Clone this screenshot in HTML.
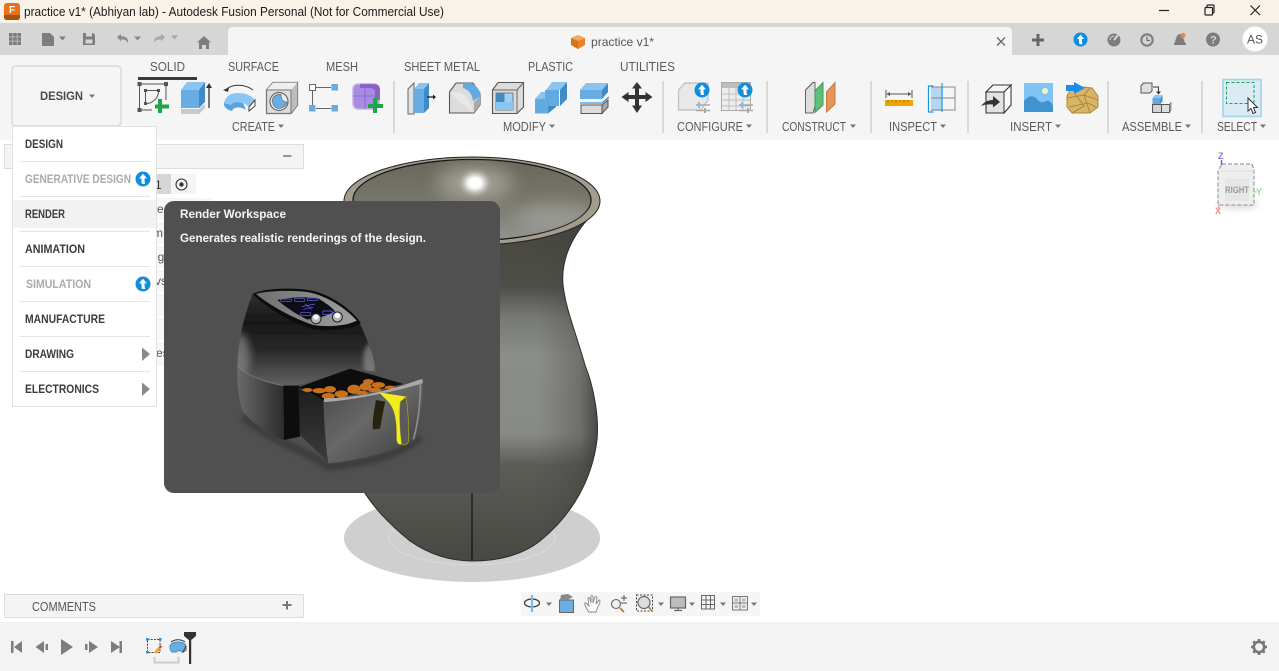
<!DOCTYPE html>
<html><head><meta charset="utf-8"><title>practice v1*</title>
<style>
html,body{margin:0;padding:0;background:#fff;width:1279px;height:671px;overflow:hidden}
svg{display:block;position:absolute;left:0;top:0}
text{font-family:"Liberation Sans",sans-serif;font-size:12px;fill:#555}
.t{font-size:12.5px;fill:#5a5a5a}
.m{font-size:11.5px;font-weight:bold;fill:#3c3c3c}
.d{font-size:11.5px;font-weight:bold;fill:#ababab}
.c{fill:#777}
</style></head><body>
<svg width="1279" height="671" viewBox="0 0 1279 671" xmlns="http://www.w3.org/2000/svg">
<defs>
<symbol id="up" viewBox="0 0 16 16"><circle cx="8" cy="8" r="7.5" fill="#0f8ee0"/><path d="M8 2.8L12 7.4H9.6C9.4 9.5 9.6 11 10.2 13H7C6.4 11 6.3 9 6.5 7.4H4Z" fill="#fff"/></symbol>
<linearGradient id="vb" x1="0" y1="0" x2="0" y2="1"><stop offset="0" stop-color="#46463f"/><stop offset=".2" stop-color="#4e4e48"/><stop offset=".29" stop-color="#777975"/><stop offset=".4" stop-color="#8b8d89"/><stop offset=".63" stop-color="#888a86"/><stop offset=".72" stop-color="#5c5c57"/><stop offset="1" stop-color="#484742"/></linearGradient>
<linearGradient id="vh" x1="0" y1="0" x2="1" y2="0"><stop offset=".76" stop-color="#444" stop-opacity="0"/><stop offset=".93" stop-color="#3c3c38" stop-opacity=".35"/><stop offset="1" stop-color="#33332f" stop-opacity=".75"/></linearGradient>
<linearGradient id="rim" x1="0" y1="0" x2="0" y2="1"><stop offset="0" stop-color="#686759"/><stop offset=".5" stop-color="#77766b"/><stop offset="1" stop-color="#93948e"/></linearGradient>
<clipPath id="rc"><ellipse cx="472" cy="200" rx="119" ry="40.5"/></clipPath>
<linearGradient id="f1" x1="0" y1="0" x2="0" y2="1"><stop offset="0" stop-color="#333"/><stop offset=".35" stop-color="#181818"/><stop offset=".62" stop-color="#282828"/><stop offset="1" stop-color="#626262"/></linearGradient>
<linearGradient id="f2" x1="0" y1="0" x2="1" y2="0"><stop offset="0" stop-color="#6a6a6a"/><stop offset=".55" stop-color="#474747"/><stop offset="1" stop-color="#2c2c2c"/></linearGradient>
<linearGradient id="f3" x1="0" y1="0" x2="1" y2="1"><stop offset="0" stop-color="#484848"/><stop offset=".45" stop-color="#686868"/><stop offset="1" stop-color="#3a3a3a"/></linearGradient>
<linearGradient id="f4" x1="0" y1="0" x2="1" y2="0"><stop offset="0" stop-color="#6f6f6f"/><stop offset="1" stop-color="#a0a0a0"/></linearGradient>
<linearGradient id="f5" x1="0" y1="0" x2="0" y2="1"><stop offset="0" stop-color="#1d1d1d"/><stop offset="1" stop-color="#3c3c3c"/></linearGradient>
<clipPath id="fc"><path d="M158 72C190 55 270 52 325 60C395 72 455 120 480 162C500 205 522 255 528 305L450 296L295 345L250 347C190 337 135 315 112 290C112 225 132 135 158 72Z"/></clipPath>
<filter id="b1"><feGaussianBlur stdDeviation="1"/></filter>
<filter id="b4" x="-100%" y="-100%" width="300%" height="300%"><feGaussianBlur stdDeviation="3.5"/></filter>
<filter id="b6" x="-100%" y="-100%" width="300%" height="300%"><feGaussianBlur stdDeviation="6"/></filter>
<filter id="b12" x="-100%" y="-100%" width="300%" height="300%"><feGaussianBlur stdDeviation="12"/></filter>
<filter id="b9" x="-100%" y="-100%" width="300%" height="300%"><feGaussianBlur stdDeviation="9"/></filter>
</defs>

<!-- backgrounds -->
<rect x="0" y="0" width="1279" height="23" fill="#f9f2e9"/>
<rect x="0" y="23" width="1279" height="32" fill="#d6d6d6"/>
<path d="M228 55V32Q228 27 233 27H1007Q1012 27 1012 32V55Z" fill="#f5f5f5"/>
<rect x="0" y="55" width="1279" height="85" fill="#f5f5f5"/>
<rect x="0" y="622" width="1279" height="49" fill="#f3f3f3"/>

<!-- title bar -->
<rect x="4" y="3" width="16" height="17" rx="3" fill="#e8711a"/><path d="M4 15H20V17Q20 20 17 20H7Q4 20 4 17Z" fill="#a8500f"/>
<text x="9" y="13" style="font-size:10px;font-weight:bold;fill:#fff">F</text>
<text x="24" y="16" textLength="420" lengthAdjust="spacingAndGlyphs" style="font-size:12.5px;fill:#1c1c1c">practice v1* (Abhiyan lab) - Autodesk Fusion Personal (Not for Commercial Use)</text>
<path d="M1159 10.5H1169" stroke="#222" stroke-width="1.2"/>
<g fill="none" stroke="#222" stroke-width="1.2"><rect x="1205" y="7.5" width="7.5" height="7.5" rx="1"/><path d="M1207 7V6Q1207 5 1208 5H1213Q1214 5 1214 6V12Q1214 13 1213 13"/><path d="M1250.5 5.5L1260 15M1260 5.5L1250.5 15"/></g>

<!-- quick access row -->
<g fill="#7d7d7d"><rect x="9" y="33" width="3.6" height="3.6"/><rect x="13.2" y="33" width="3.6" height="3.6"/><rect x="17.4" y="33" width="3.6" height="3.6"/><rect x="9" y="37.2" width="3.6" height="3.6"/><rect x="13.2" y="37.2" width="3.6" height="3.6"/><rect x="17.4" y="37.2" width="3.6" height="3.6"/><rect x="9" y="41.4" width="3.6" height="3.6"/><rect x="13.2" y="41.4" width="3.6" height="3.6"/><rect x="17.4" y="41.4" width="3.6" height="3.6"/></g>
<path d="M42 33H50L54 37V46H42Z" fill="#7d7d7d"/><path d="M59 36.5H66L62.5 40.5Z" fill="#7d7d7d"/>
<path d="M83 33H93L95 35V45H83Z" fill="#7d7d7d"/><rect x="86" y="33" width="6" height="3.5" fill="#d6d6d6"/><rect x="85.5" y="39.5" width="7" height="4" fill="#d6d6d6"/>
<path d="M117 37L121 34V36.2C126 36 128.5 38.5 128 43C126.5 40 124.5 39.2 121 39.5V41.5Z" fill="#8a8a8a"/><path d="M134 36.5H141L137.5 40.5Z" fill="#8a8a8a"/>
<path d="M165 37L161 34V36.2C156 36 153.5 38.5 154 43C155.5 40 157.5 39.2 161 39.5V41.5Z" fill="#a8a8a8"/><path d="M171 35.5H178L174.5 39.5Z" fill="#a8a8a8"/>
<path d="M197 42.5L204 36L211 42.5H209V49H206V45H202V49H199V42.5Z" fill="#7d7d7d"/>

<!-- tab -->
<path d="M578 35L585 38V45L578 49L571 45V38Z" fill="#e8842c"/><path d="M571 38L578 41L585 38L578 35Z" fill="#f3a761"/><path d="M578 41V49L571 45V38Z" fill="#d8721b"/>
<text x="591" y="46" textLength="63" lengthAdjust="spacingAndGlyphs">practice v1*</text>
<path d="M997 37.500L1005 45.500M1005 37.500L997 45.500" stroke="#666" stroke-width="1.300"/>
<path d="M1038 34V46M1032 40H1044" stroke="#666" stroke-width="3"/>
<use href="#up" x="1073" y="32" width="15" height="15"/>
<circle cx="1114" cy="40" r="6.500" fill="#7d7d7d"/><path d="M1114 40L1118 35" stroke="#d6d6d6" stroke-width="2"/><path d="M1110 40A4 4 0 0 1 1114 36" stroke="#d6d6d6" fill="none"/>
<circle cx="1147" cy="40" r="6.700" fill="#7d7d7d"/><circle cx="1147" cy="40" r="4.600" fill="#d6d6d6"/><path d="M1147 36.500V40.500H1150" stroke="#6e6e6e" fill="none" stroke-width="1.200"/>
<path d="M1174 43.500C1176.500 41 1175 35 1180 34C1184 35 1183 41 1186 43.500V45H1174Z" fill="#7d7d7d"/><circle cx="1183" cy="35.500" r="2.500" fill="#f0804a"/>
<circle cx="1213" cy="39.500" r="7" fill="#7d7d7d"/><text x="1210" y="43.500" style="font-size:11px;font-weight:bold;fill:#d6d6d6">?</text>
<circle cx="1255" cy="39" r="12.500" fill="#fff"/><text x="1247" y="43.500" textLength="16" lengthAdjust="spacingAndGlyphs">AS</text>

<!-- tabs text -->
<text class="t" x="150" y="71" textLength="35" lengthAdjust="spacingAndGlyphs">SOLID</text>
<text class="t" x="228" y="71" textLength="51" lengthAdjust="spacingAndGlyphs">SURFACE</text>
<text class="t" x="326" y="71" textLength="32" lengthAdjust="spacingAndGlyphs">MESH</text>
<text class="t" x="404" y="71" textLength="76" lengthAdjust="spacingAndGlyphs">SHEET METAL</text>
<text class="t" x="528" y="71" textLength="45" lengthAdjust="spacingAndGlyphs">PLASTIC</text>
<text class="t" x="620" y="71" textLength="55" lengthAdjust="spacingAndGlyphs">UTILITIES</text>
<rect x="138" y="77" width="59" height="3" fill="#3a3a3a"/>

<!-- design button -->
<rect x="12" y="66" width="109" height="60" rx="4" fill="#f5f5f5" stroke="#d9d9d9" stroke-width="1.500"/>
<text x="40" y="100" textLength="43" lengthAdjust="spacingAndGlyphs" style="font-weight:bold;fill:#4a4a4a">DESIGN</text>
<path d="M89 94.500H95L92 98Z" class="c"/>

<!-- separators -->
<g fill="#d9d9d9"><rect x="393" y="81" width="2" height="52"/><rect x="662" y="81" width="2" height="52"/><rect x="766" y="81" width="2" height="52"/><rect x="870" y="81" width="2" height="52"/><rect x="967" y="81" width="2" height="52"/><rect x="1107" y="81" width="2" height="52"/><rect x="1201" y="81" width="2" height="52"/></g>

<!-- group labels -->
<text class="t" x="232" y="131" textLength="43" lengthAdjust="spacingAndGlyphs">CREATE</text><path d="M278 124.500H284L281 128Z" class="c"/>
<text class="t" x="503" y="131" textLength="43" lengthAdjust="spacingAndGlyphs">MODIFY</text><path d="M549 124.500H555L552 128Z" class="c"/>
<text class="t" x="677" y="131" textLength="66" lengthAdjust="spacingAndGlyphs">CONFIGURE</text><path d="M746 124.500H752L749 128Z" class="c"/>
<text class="t" x="782" y="131" textLength="64" lengthAdjust="spacingAndGlyphs">CONSTRUCT</text><path d="M850 124.500H856L853 128Z" class="c"/>
<text class="t" x="889" y="131" textLength="48" lengthAdjust="spacingAndGlyphs">INSPECT</text><path d="M940 124.500H946L943 128Z" class="c"/>
<text class="t" x="1010" y="131" textLength="42" lengthAdjust="spacingAndGlyphs">INSERT</text><path d="M1055 124.500H1061L1058 128Z" class="c"/>
<text class="t" x="1122" y="131" textLength="60" lengthAdjust="spacingAndGlyphs">ASSEMBLE</text><path d="M1185 124.500H1191L1188 128Z" class="c"/>
<text class="t" x="1217" y="131" textLength="40" lengthAdjust="spacingAndGlyphs">SELECT</text><path d="M1260 124.500H1266L1263 128Z" class="c"/>

<!-- CREATE icons -->
<g fill="#555"><rect x="137.500" y="82" width="4" height="4"/><rect x="164" y="82" width="4" height="4"/><rect x="137.500" y="108" width="4" height="4"/><rect x="144" y="89" width="3" height="3"/><rect x="157" y="89" width="3" height="3"/><rect x="144" y="102" width="3" height="3"/></g>
<path d="M141 84H164M139.500 86V108M141 110H152M166 86V100M145.500 92V102M147 90.500H157M147 103.500C153 103 158 98 158.500 92" fill="none" stroke="#555" stroke-width="1"/>
<path d="M160 99V113M155 106.500H169" stroke="#1fa64a" stroke-width="4" fill="none"/>
<path d="M181 90L187 82H205L199 90Z" fill="#8cc4f0"/><path d="M181 90H199V108H181Z" fill="#67ace3"/><path d="M199 90L205 82V102L199 108Z" fill="#3f8bc6"/><path d="M181 109H199L205 104V108L199 114H181Z" fill="#c9c9c9"/>
<path d="M209 108V85" stroke="#333" stroke-width="1.300"/><path d="M206 88L209 83L212 88Z" fill="#333"/>
<path d="M224 103C226 95 232 93 238 93C245 93 251 95 255 100L249 107C245 103 241 102 238 102C234 102 232 103 231 105Z" fill="#8ac6f5"/>
<path d="M224 103L231 105C232 103 234 102 238 102L243 103L246 110C243 108 241 107.500 238 107.500C235 107.500 233 108.500 232 111C228 110 225 108 224 105Z" fill="#5ba1da"/>
<path d="M249 107L255 100V106L249 111Z" fill="#fff" stroke="#444"/>
<path d="M226 89.500C232 84 244 83.500 253 90" fill="none" stroke="#333" stroke-width="1"/><path d="M223 90L229 87.500L228 92Z" fill="#333"/>
<path d="M266.500 90L273 82.500H297.500V105L291 113.500H266.500Z" fill="#ddd" stroke="#555" stroke-width="1.200"/><path d="M273 82.500H297.500L291 90H266.500Z" fill="#efefef"/><path d="M291 90L297.500 82.500V105L291 113.500Z" fill="#bdbdbd"/><path d="M266.500 90H291V113.500H266.500Z" fill="none" stroke="#777"/>
<circle cx="279" cy="101.500" r="9" fill="#ededed" stroke="#666" stroke-width="1.200"/><path d="M272.500 99C274 95 279 94 281 94.500C281 99 283 102 287 102C286 106 282 108.500 279 108.500C275 108.500 272 105 272.500 99Z" fill="#66aee6" stroke="#555" stroke-width=".6"/>
<rect x="309.500" y="84.500" width="6" height="6" fill="#fff" stroke="#666"/><rect x="331.500" y="84" width="6.500" height="6.500" fill="#67ace3"/><rect x="309" y="105" width="6.500" height="6.500" fill="#67ace3"/><rect x="331.500" y="105" width="6.500" height="6.500" fill="#67ace3"/>
<path d="M316 87.500H331M312.500 91V105M316 108.500H331" stroke="#666"/>
<rect x="353" y="84" width="26" height="25" rx="5" fill="#ab8ae6" stroke="#c4b6df" stroke-width="1.500"/><path d="M353 96H379M365 88V109" stroke="#8a6ecb"/><path d="M360 84H374Q380 84 380 90V100H375V92Q375 88 369 88H360Z" fill="#7f5dc0" opacity=".85"/>
<path d="M375 98V113M368 106H383" stroke="#1fa64a" stroke-width="4"/>

<!-- MODIFY icons -->
<path d="M408 89L414 83V114H408Z" fill="#e2e2e2" stroke="#666"/><path d="M414 89H424V113H414Z" fill="#67ace3"/><path d="M414 89L419 83H429L424 89Z" fill="#8cc4f0"/><path d="M424 89L429 83V108L424 113Z" fill="#3f8bc6"/>
<path d="M427 97H434" stroke="#222" stroke-width="1.300"/><path d="M433 94.500L436 97L433 99.500Z" fill="#222"/>
<path d="M449.500 92L456 83H473L480 93V105L474 113H449.500Z" fill="#dcdcdc" stroke="#555" stroke-width="1.100"/><path d="M463 83H471C476 85 480 90 481 96L473 101C472 94 469 90 463 88Z" fill="#64aae2"/><path d="M449.500 93C460 90 470 95 473 113" fill="#e8e8e8"/><path d="M474 113L480 105V97L474 102Z" fill="#a9a9a9"/>
<path d="M492.500 90L498 82.500H523.500V107L517 113.500H492.500Z" fill="#dcdcdc" stroke="#555" stroke-width="1.100"/><rect x="496" y="93" width="17" height="17" fill="#a4d0f2" stroke="#666" stroke-width=".8"/><path d="M496 93H504.500V102H496Z" fill="#3f8bc6"/><path d="M496 102H513V110H496Z" fill="#8cc4f0"/><path d="M492.500 90H517V113.500M517 90L523.500 82.500" stroke="#666" fill="none"/>
<path d="M535 99H548V113.500H535Z" fill="#64aae2"/><path d="M535 99L541 92H554L548 99Z" fill="#8cc4f0"/><path d="M548 113.500L556 107V99L548 99Z" fill="#3f8bc6"/><path d="M545 90H559V106H545Z" fill="#64aae2"/><path d="M546 90L552 82H567L560 90Z" fill="#8cc4f0"/><path d="M560 90L567 82V99L560 106Z" fill="#3f8bc6"/>
<path d="M580 90L586 83H608L602 90Z" fill="#8cc4f0"/><path d="M580 90H602V99H580Z" fill="#67ace3"/><path d="M602 90L608 83V92L602 99Z" fill="#3f8bc6"/>
<path d="M580 103H602L609 97" stroke="#3d97e0" stroke-width="1.300" fill="none"/>
<path d="M581 105H602V113.500H581Z" fill="#dcdcdc" stroke="#555"/><path d="M602 105L608 100V107L602 113.500Z" fill="#a9a9a9" stroke="#555"/>
<path d="M637 82L642 88.500H639V95H645.500V92L652.500 97L645.500 102V99H639V105.500H642L637 113L632 105.500H635V99H628.500V102L621.500 97L628.500 92V95H635V88.500H632Z" fill="#333"/>

<!-- CONFIGURE -->
<path d="M678.500 90L685 83H708V100L701 110H678.500Z" fill="#e8e8e8" stroke="#bdbdbd" stroke-width="1.200"/>
<path d="M696 105H710M696 110.500H710" stroke="#a8a8a8" stroke-width="1.500"/><rect x="698" y="102" width="2" height="6" fill="#86bde8"/><rect x="704" y="108" width="2" height="5" fill="#a8a8a8"/>
<use href="#up" x="694" y="82" width="16" height="16"/>
<rect x="721.500" y="82.500" width="29" height="28" fill="#ededed" stroke="#aaa"/><rect x="722" y="83" width="28" height="5" fill="#bdbdbd"/><path d="M722 94H750M722 100H750M722 106H750M729 88V110M736 88V110M743 88V110" stroke="#bdbdbd"/>
<path d="M739 105H753M739 110.500H753" stroke="#a8a8a8" stroke-width="1.500"/><rect x="741" y="102" width="2" height="6" fill="#86bde8"/><rect x="747" y="108" width="2" height="5" fill="#a8a8a8"/>
<use href="#up" x="737" y="82" width="16" height="16"/>

<!-- CONSTRUCT -->
<path d="M805.500 90L813 82.500V106L805.500 112.500Z" fill="#e4e4e4" stroke="#666"/><path d="M805.500 90L813 82.500L815 82.500V106L813 113H805.500Z" fill="#ddd" stroke="#666"/>
<path d="M815 91L823 82.500V105L815 112.500Z" fill="#5dc07a" stroke="#3a9a58"/><path d="M826.500 92L835 82.500V104L826.500 112Z" fill="#e4965c" stroke="#c97a3e"/>

<!-- INSPECT -->
<rect x="885" y="100" width="28" height="6" fill="#f0a400"/><path d="M888 100V103M892 100V102M896 100V103M900 100V102M904 100V103M908 100V102" stroke="#8a6000" stroke-width=".7"/>
<path d="M886 90V98M912 90V98" stroke="#555"/><path d="M887 94H911" stroke="#555"/><path d="M890 92L886.500 94L890 96ZM908 92L911.500 94L908 96Z" fill="#555"/>
<path d="M933.500 86H928.500V112H933.500" fill="none" stroke="#2196e6" stroke-width="1.200"/><rect x="931" y="87" width="11" height="24" fill="#b3d6f2"/><path d="M931 98H955M931 87H955V110H931" fill="none" stroke="#8a8a8a"/><path d="M942 83V112" stroke="#2196e6" stroke-width="1.200"/>

<!-- INSERT -->
<path d="M986 92L993 85H1011V105L1004 113H986Z" fill="#e2e2e2" stroke="#333" stroke-width="1.100"/><path d="M1004 92V113L1011 105V85Z" fill="#fafafa" stroke="#333" stroke-width="1"/><path d="M986 92H1004L1011 85H993Z" fill="#f5f5f5" stroke="#333" stroke-width="1"/>
<path d="M981 106C984 102 988 100 993 100V96L1000 102L993 107.500V104.500C988 104 984 104.500 981 106Z" fill="#333"/>
<rect x="1024" y="83" width="29" height="29" fill="#7fc4f5"/><circle cx="1045" cy="91" r="3" fill="#f6f2c4"/><path d="M1024 112V101C1029 95 1033 95 1037 99C1040 103 1043 103 1046 101C1049 100 1052 103 1053 106V112Z" fill="#3f93cf"/>
<path d="M1070 90L1083 87L1092 88L1098 96V107L1090 113H1072L1067 107V96Z" fill="#d8b465" stroke="#a98a3e"/>
<path d="M1067 98L1084 95L1098 100M1069 107L1088 103L1096 107M1075 94L1084 106L1072 113M1084 95L1090 113M1090 88L1084 95" fill="none" stroke="#9c7f38" stroke-width=".8"/>
<path d="M1066 85H1074V82L1085 88L1074 94V91H1066Z" fill="#1b8fe8"/>

<!-- ASSEMBLE -->
<path d="M1141 86L1143.500 83H1152V91L1149.500 93H1141Z" fill="#dfdfdf" stroke="#555"/>
<path d="M1153 87H1158.500V92" stroke="#333" fill="none"/><path d="M1156 91.500H1161L1158.500 94.500Z" fill="#333"/>
<path d="M1152.500 98L1155 95H1162.500L1160 98Z" fill="#8cc4f0"/><rect x="1152.500" y="98" width="8" height="6" fill="#63a8e0"/><path d="M1160.500 98L1162.500 95V101L1160.500 104Z" fill="#3f8bc6"/>
<rect x="1152.500" y="104.500" width="9" height="8" fill="#d5d5d5" stroke="#555"/><rect x="1161.500" y="104.500" width="8" height="8" fill="#dfdfdf" stroke="#555"/><path d="M1169.500 104.500L1171 102.500V110L1169.500 112.500Z" fill="#bbb" stroke="#555" stroke-width=".6"/>

<!-- SELECT -->
<rect x="1223" y="79.500" width="38" height="37" fill="#daebf5" stroke="#a9d3ec" stroke-width="1.700"/>
<rect x="1226.500" y="82.500" width="27.500" height="21" fill="none" stroke="#16a34a" stroke-width="1" stroke-dasharray="3 2"/>
<path d="M1248 98V111L1251 108.500L1253 113.500L1255.500 112.500L1253.500 107.500L1257.500 107.500Z" fill="#fff" stroke="#333" stroke-width="1"/>

<!-- VASE -->
<ellipse cx="472" cy="538" rx="128" ry="44" fill="#cfcfcf"/>
<ellipse cx="472" cy="538" rx="83" ry="27" fill="none" stroke="#d6d6d6" stroke-width="2"/>
<path d="M355 218C366 232 376 250 381 264C384 290 375 322 365 350C352 385 346 420 347 440C350 480 372 510 410 541C430 555 450 561 472 561C498 561 522 555 540 541C572 515 592 480 597 440C599 420 595 390 585 365C575 330 566 310 563 285C561 262 570 240 587 220Z" fill="url(#vb)" stroke="#2a2a2a" stroke-width="1"/>
<path d="M355 218C366 232 376 250 381 264C384 290 375 322 365 350C352 385 346 420 347 440C350 480 372 510 410 541C430 555 450 561 472 561C498 561 522 555 540 541C572 515 592 480 597 440C599 420 595 390 585 365C575 330 566 310 563 285C561 262 570 240 587 220Z" fill="url(#vh)"/>
<path d="M472 490V560" stroke="#111" stroke-width="1.200"/>
<ellipse cx="472" cy="201" rx="128" ry="44" fill="#a19c8e" stroke="#222" stroke-width="1"/>
<ellipse cx="472" cy="200" rx="119" ry="40.500" fill="url(#rim)" stroke="#111" stroke-width="1.200"/>
<g clip-path="url(#rc)">
<ellipse cx="555" cy="218" rx="40" ry="14" fill="#a3a49f" opacity=".7" filter="url(#b9)"/>
<ellipse cx="475" cy="183" rx="38" ry="18" fill="#aeaca3" opacity=".75" filter="url(#b9)"/>
<ellipse cx="475" cy="183" rx="11" ry="9" fill="#fff" filter="url(#b4)"/>
<ellipse cx="475" cy="183" rx="7" ry="6" fill="#fff" filter="url(#b1)" opacity=".8"/>
</g>

<!-- Panel: browser behind -->
<rect x="4.500" y="144.500" width="299" height="24" fill="#f4f4f4" stroke="#dcdcdc"/>
<path d="M283 156H291.500" stroke="#777" stroke-width="1.500"/>
<rect x="157" y="174" width="14" height="20" fill="#d6d6d6"/><rect x="171" y="174" width="25" height="20" fill="#f5f5f5"/>
<text x="155" y="189" style="fill:#333">1</text>
<circle cx="181.500" cy="184.500" r="5.500" fill="none" stroke="#333" stroke-width="1.100"/><circle cx="181.500" cy="184.500" r="2.200" fill="#333"/>
<g fill="#f7f7f7"><rect x="157" y="198" width="55" height="22"/><rect x="157" y="222" width="10" height="22"/><rect x="157" y="246" width="10" height="22"/><rect x="157" y="270" width="10" height="22"/><rect x="157" y="294" width="10" height="22"/><rect x="157" y="318" width="10" height="22"/><rect x="157" y="342" width="10" height="24"/></g>
<text x="149" y="213" style="fill:#555">Se</text><text x="153" y="237" style="fill:#555">m</text><text x="155" y="261" style="fill:#555">ig</text><text x="155" y="285" style="fill:#555">vs</text><text x="156" y="357" style="fill:#555">es</text>

<!-- Tooltip -->
<rect x="164" y="201" width="336" height="292" rx="10" fill="#505050"/>
<text x="180" y="218" textLength="106" lengthAdjust="spacingAndGlyphs" style="font-weight:bold;fill:#f5f5f5">Render Workspace</text>
<text x="180" y="242" textLength="246" lengthAdjust="spacingAndGlyphs" style="font-weight:bold;fill:#f5f5f5">Generates realistic renderings of the design.</text>

<!-- Air fryer -->
<g transform="translate(200 270) scale(.33333)">
<path d="M130 440C220 520 320 540 385 590C480 580 600 560 660 500" fill="none" stroke="#2c2c2c" stroke-width="24" opacity=".5" filter="url(#b6)"/>
<g filter="url(#b1)">
<path d="M158 72C190 55 270 52 325 60C395 72 455 120 480 162C500 205 522 255 528 305L450 296L295 345L250 347C190 337 135 315 112 290C112 225 132 135 158 72Z" fill="url(#f1)"/>
<g clip-path="url(#fc)">
<ellipse cx="120" cy="260" rx="30" ry="70" fill="#8a8a8a" opacity=".7" filter="url(#b12)"/>
<ellipse cx="510" cy="270" rx="20" ry="50" fill="#9a9a9a" opacity=".6" filter="url(#b6)"/>
</g>
<path d="M112 290C150 322 200 338 250 347L252 510C200 490 145 450 126 420C116 385 110 335 112 290Z" fill="url(#f2)"/>
<path d="M112 290C150 322 200 338 250 347" fill="none" stroke="#808080" stroke-width="2"/>
<path d="M250 347L298 347L300 500L252 510Z" fill="#101010"/>
<path d="M158 72C190 55 270 52 325 60C395 72 455 120 482 158C470 175 400 185 340 178C270 155 200 115 158 72Z" fill="#101010"/>
<path d="M168 72C200 62 270 60 322 66C385 78 440 118 470 152C440 168 385 172 340 165C280 145 215 110 168 72Z" fill="url(#f4)"/>
<path d="M232 90C260 82 320 80 352 84C380 100 398 115 405 124C380 138 345 148 320 148C285 130 255 110 232 90Z" fill="#0c0c14"/>
<g fill="none" stroke="#6a66ff" stroke-width="2"><rect x="242" y="87" width="32" height="8" rx="3"/><rect x="283" y="86" width="32" height="8" rx="3"/><rect x="322" y="84" width="30" height="8" rx="3"/><path d="M305 110L345 102M310 118L340 112M315 102L335 118"/><rect x="302" y="127" width="30" height="10" rx="4"/><rect x="368" y="123" width="30" height="10" rx="4"/></g>
<circle cx="348" cy="146" r="15" fill="#b8b8b8" stroke="#222" stroke-width="3"/><circle cx="348" cy="141" r="8" fill="#fff"/>
<circle cx="412" cy="141" r="15" fill="#b8b8b8" stroke="#222" stroke-width="3"/><circle cx="412" cy="136" r="8" fill="#fff"/>
<path d="M295 352L450 296L530 318L610 342L372 392Z" fill="#0b0b0b"/>
<g fill="#c9701c"><ellipse cx="322" cy="360" rx="16" ry="6"/><ellipse cx="358" cy="362" rx="20" ry="8"/><ellipse cx="390" cy="358" rx="18" ry="10"/><ellipse cx="385" cy="378" rx="20" ry="9"/><ellipse cx="424" cy="372" rx="20" ry="11"/><ellipse cx="462" cy="358" rx="20" ry="14"/><ellipse cx="497" cy="350" rx="18" ry="12"/><ellipse cx="505" cy="335" rx="16" ry="8"/><ellipse cx="535" cy="345" rx="20" ry="9"/><ellipse cx="570" cy="352" rx="16" ry="5"/><ellipse cx="525" cy="360" rx="20" ry="7"/><ellipse cx="485" cy="368" rx="18" ry="6"/></g>
<path d="M295 355L372 392L387 578L300 495Z" fill="url(#f5)"/>
<path d="M370 392C450 388 580 362 668 332C670 400 660 480 645 512C560 552 450 575 385 580C376 520 372 450 370 392Z" fill="url(#f3)"/>
<path d="M372 385L372 396C450 392 580 366 668 340L668 328C660 326 620 345 560 360C500 375 430 385 372 385Z" fill="#a8a8a8"/>
<path d="M661 340C662 400 652 470 640 508" fill="none" stroke="#8c8c8c" stroke-width="5"/>
<path d="M528 390C522 420 516 460 519 478L540 476C546 445 550 420 556 395Z" fill="#25240e"/>
<path d="M618 380C624 420 627 470 626 512C622 526 612 526 604 522C598 480 598 430 600 395Z" fill="#5a5a5a" stroke="#b0ab20" stroke-width="2"/>
<path d="M537 367L618 380L600 395C596 420 598 470 604 522C598 526 592 520 590 512C590 470 590 425 566 396Z" fill="#f3ec1c"/>
</g></g>

<!-- Menu -->
<rect x="12.500" y="126.500" width="144" height="280" fill="#fff" stroke="#e2e2e2"/>
<rect x="13" y="200" width="143" height="28" fill="#f2f2f2"/>
<g stroke="#e6e6e6"><path d="M19 161.500H150M19 196.500H150M19 231.500H150M19 266.500H150M19 301.500H150M19 336.500H150M19 371.500H150"/></g>
<text class="m" x="25" y="148" textLength="38" lengthAdjust="spacingAndGlyphs">DESIGN</text>
<text class="d" x="25" y="183" textLength="106" lengthAdjust="spacingAndGlyphs">GENERATIVE DESIGN</text>
<text class="m" x="25" y="218" textLength="40" lengthAdjust="spacingAndGlyphs">RENDER</text>
<text class="m" x="25" y="253" textLength="60" lengthAdjust="spacingAndGlyphs">ANIMATION</text>
<text class="d" x="26" y="288" textLength="65" lengthAdjust="spacingAndGlyphs">SIMULATION</text>
<text class="m" x="25" y="323" textLength="80" lengthAdjust="spacingAndGlyphs">MANUFACTURE</text>
<text class="m" x="25" y="358" textLength="49" lengthAdjust="spacingAndGlyphs">DRAWING</text>
<text class="m" x="25" y="393" textLength="74" lengthAdjust="spacingAndGlyphs">ELECTRONICS</text>
<use href="#up" x="135" y="171" width="16" height="16"/><use href="#up" x="135" y="276" width="16" height="16"/>
<path d="M142 347.500L150 354L142 361ZM142 382.500L150 389L142 396Z" fill="#8a8a8a"/>

<!-- ViewCube -->
<ellipse cx="1238" cy="204" rx="20" ry="5" fill="#ddd" filter="url(#b4)"/>
<path d="M1222 164H1252L1254 170V205H1218V171Z" fill="#eee" stroke="#8a8a8a" stroke-dasharray="4 2" stroke-width="1"/>
<path d="M1218 171H1254" stroke="#ddd"/><rect x="1225" y="179" width="24" height="22" fill="#e6e6e6"/>
<text x="1225" y="193" textLength="24" lengthAdjust="spacingAndGlyphs" style="font-size:9px;font-weight:bold;fill:#999">RIGHT</text>
<text x="1218" y="159" style="font-size:9px;font-weight:bold;fill:#7b7be8">Z</text><text x="1215" y="214" style="font-size:9px;font-weight:bold;fill:#ef8c8c">X</text><text x="1256" y="195" style="font-size:9px;font-weight:bold;fill:#8fdc8f">Y</text>
<path d="M1221.500 160V165" stroke="#6a6ae0" stroke-width="1.500"/><path d="M1218 205L1219 209" stroke="#ef8c8c"/><path d="M1254 192H1257" stroke="#8fdc8f"/>

<!-- comments -->
<rect x="4.500" y="594.500" width="299" height="23" fill="#f4f4f4" stroke="#dcdcdc"/>
<text x="32" y="611" textLength="64" lengthAdjust="spacingAndGlyphs" style="font-size:12.5px;fill:#555">COMMENTS</text>
<path d="M287 601V609.500M282.500 605H291.500" stroke="#777" stroke-width="2"/>

<!-- nav bar -->
<rect x="521" y="592" width="239" height="24" fill="#f5f5f5"/>
<ellipse cx="532" cy="603" rx="7.500" ry="4" fill="none" stroke="#333" stroke-width="1.200"/><path d="M532 595V612" stroke="#78bcf0" stroke-width="2.200"/>
<path d="M546 602.500H552L549 606Z" class="c"/>
<rect x="559.500" y="600" width="14" height="12.500" fill="#6aaee4" stroke="#666"/><path d="M560 600L561 595L568 594L573 597L567 600Z" fill="#888"/>
<path d="M588 611C586 607 584 604 585 603C587 603 588 605 589 606L588 598C589 597 590 598 590 599L591 603L591 596C592 595 593 596 593 597V603L595 597C596 596 597 597 597 598L596 604L599 600C600 600 600 601 600 602L597 609L596 612H589Z" fill="#fafafa" stroke="#888" stroke-width=".9"/>
<circle cx="616" cy="604" r="4.500" fill="#eee" stroke="#666" stroke-width="1.100"/><path d="M620 608L624 612" stroke="#a97a3a" stroke-width="1.600"/><path d="M621 598H627M624 595V601M621 603H627" stroke="#555"/>
<rect x="636.500" y="595" width="16" height="16" fill="none" stroke="#444" stroke-dasharray="2 1.500"/><circle cx="644" cy="602.500" r="6" fill="#ddd" stroke="#666" stroke-width="1.200"/><path d="M648.500 607L652 611" stroke="#a97a3a" stroke-width="1.600"/>
<path d="M658 602.500H664L661 606Z" class="c"/>
<rect x="670.500" y="597" width="15" height="11" fill="#bcbcbc" stroke="#666" stroke-width="1.200"/><path d="M678 608V610M674 610.500H682" stroke="#666" stroke-width="1.200"/>
<path d="M689 602.500H695L692 606Z" class="c"/>
<path d="M701.500 595.500H714.500V609H701.500ZM701.500 600H714.500M701.500 604.500H714.500M706 595.500V609M710.500 595.500V609" fill="none" stroke="#666" stroke-width="1"/>
<path d="M720 602.500H726L723 606Z" class="c"/>
<rect x="732.500" y="596.500" width="15" height="13.500" fill="#f0f0f0" stroke="#777"/><path d="M732.500 603H747.500M740 596.500V610" stroke="#777"/><g fill="#bbb"><rect x="734.500" y="598.500" width="3.500" height="3"/><rect x="742" y="598.500" width="3.500" height="3"/><rect x="734.500" y="605" width="3.500" height="3"/><rect x="742" y="605" width="3.500" height="3"/></g>
<path d="M751 602.500H757L754 606Z" class="c"/>

<!-- timeline -->
<g fill="#7d7d7d"><rect x="11" y="641" width="2.500" height="12"/><path d="M22 641V653L14 647Z"/><path d="M35.500 647L44 641V653Z"/><rect x="45.500" y="644" width="2.500" height="6"/><path d="M61 639L73 647L61 655Z"/><rect x="85" y="644" width="2.500" height="6"/><path d="M89 641L98 647L89 653Z"/><path d="M111 641L120 647L111 653Z"/><rect x="119.500" y="641" width="2.500" height="12"/></g>
<rect x="147.500" y="639.500" width="12.500" height="13" fill="none" stroke="#444" stroke-dasharray="2 1.200"/>
<rect x="146" y="638" width="2.500" height="2.500" fill="#2196e6"/><rect x="159" y="638" width="2.500" height="2.500" fill="#2196e6"/><rect x="146" y="651" width="2.500" height="2.500" fill="#2196e6"/>
<path d="M155 653L161 646" stroke="#eda320" stroke-width="2.500"/><path d="M159.500 646L161.500 647.500" stroke="#d84c3c" stroke-width="2.500"/>
<path d="M170 648C170 643 174 642 178 642C182 642 185 643 186 646L183 652C180 650 178 650 176 652L172 652C171 651 170 650 170 648Z" fill="#67ace3" stroke="#3f8bc6"/><path d="M171 642C175 639 181 639 185 642" fill="none" stroke="#333"/><path d="M183 652L186 646V650Z" fill="#fff" stroke="#444"/>
<path d="M154.500 657V662.500H178.500V657" fill="none" stroke="#ccc" stroke-width="2"/>
<path d="M184 632H196V636L190 641L184 636Z" fill="#333"/><rect x="189" y="640" width="2.200" height="24" fill="#333"/>
<g transform="translate(1259 647)"><circle r="5.200" fill="none" stroke="#777" stroke-width="2.600"/><g stroke="#777" stroke-width="2.600"><path d="M0 -8V-5.500M0 8V5.500M-8 0H-5.500M8 0H5.500M-5.700 -5.700L-4 -4M5.700 5.700L4 4M-5.700 5.700L-4 4M5.700 -5.700L4 -4"/></g></g>
</svg>
</body></html>
